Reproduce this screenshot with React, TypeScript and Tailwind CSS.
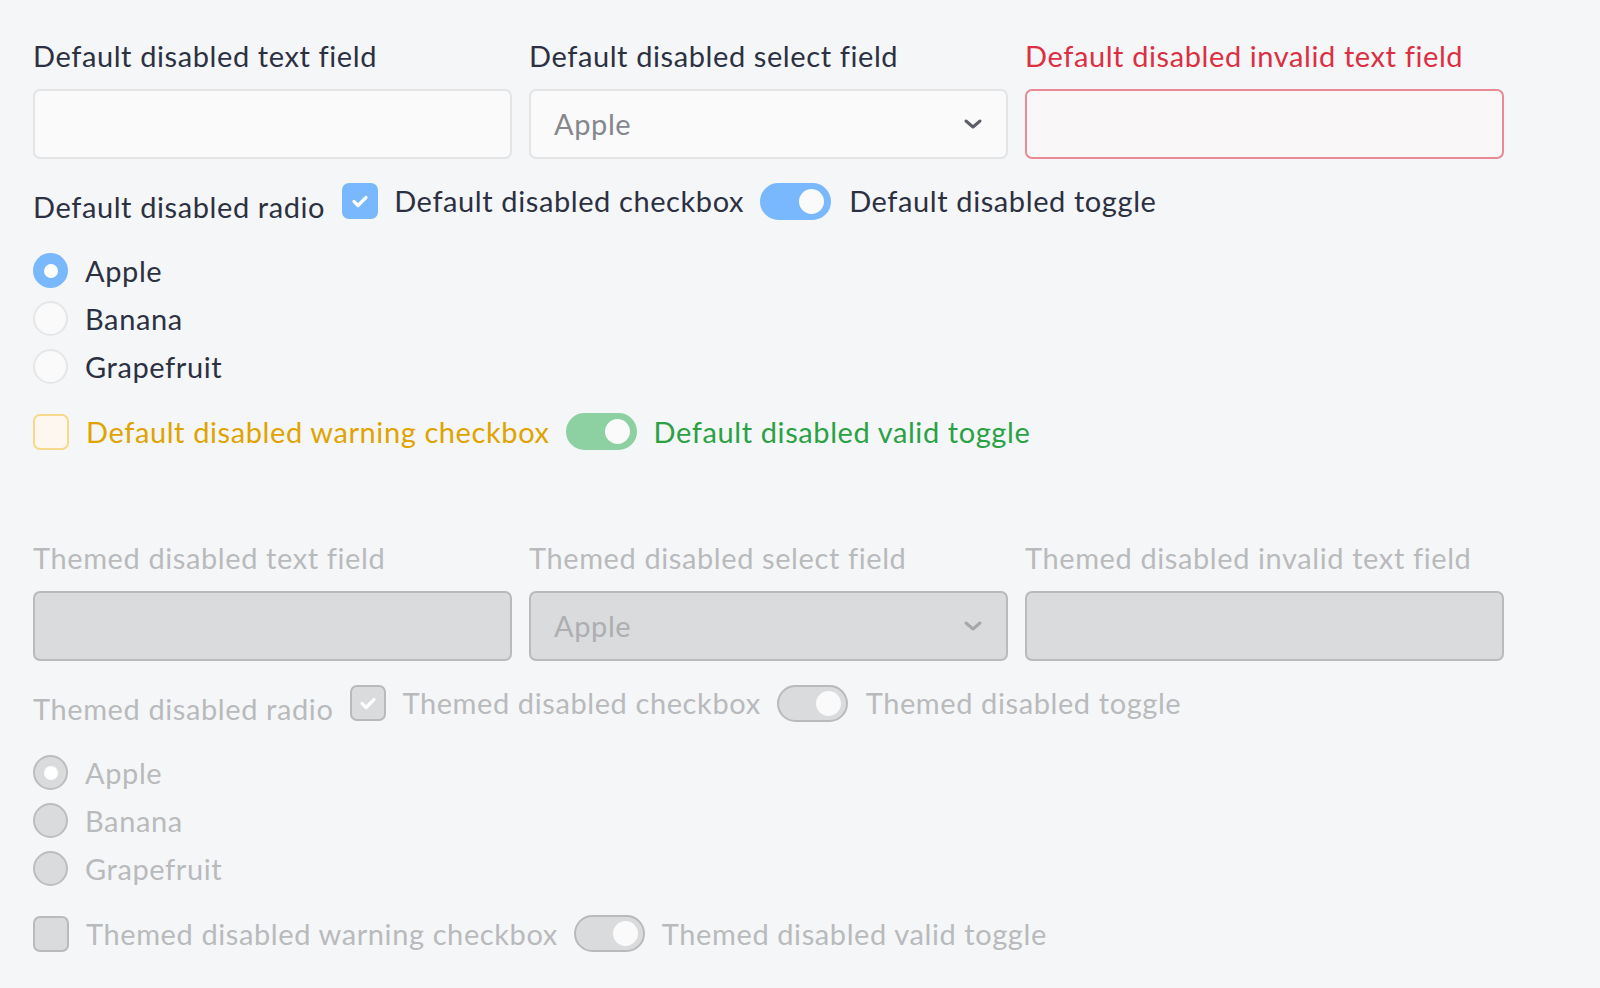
import React from "react";

type Theme = "default" | "themed";

function Chevron({ color }: { color: string }) {
    return (
        <svg width="22" height="14" viewBox="0 0 22 14" fill="none">
            <path d="M4 4l7 6 7-6" stroke={color} strokeWidth="3" strokeLinecap="round" strokeLinejoin="round" />
        </svg>
    );
}

function Check() {
    return (
        <svg width="26" height="26" viewBox="0 0 26 26" fill="none">
            <path d="M7 13.5l4 4L19 9.5" stroke="#ffffff" strokeWidth="3.2" strokeLinecap="round" strokeLinejoin="round" />
        </svg>
    );
}

function Field({ theme }: { theme: Theme }) {
    const d = theme === "default";
    const labels = d
        ? ["Default disabled text field", "Default disabled select field", "Default disabled invalid text field"]
        : ["Themed disabled text field", "Themed disabled select field", "Themed disabled invalid text field"];
    const label = d ? "text-[#2c3142]" : "text-[#b9babc]";
    const box = d
        ? "h-[70px] rounded-[7px] border-2 border-[#e3e4e6] bg-[#fafafa]"
        : "h-[70px] rounded-[7px] border-2 border-[#b9babb] bg-[#dadbdd]";
    return (
        <div className="grid grid-cols-[479px_479px_479px] gap-x-[17px]">
            <div className="flex flex-col gap-[13px]">
                <span className={`leading-[40px] ${label}`}>{labels[0]}</span>
                <div className={box} />
            </div>
            <div className="flex flex-col gap-[13px]">
                <span className={`leading-[40px] ${label}`}>{labels[1]}</span>
                <div className={`${box} flex items-center justify-between pl-[23px] pr-[22px]`}>
                    <span className={d ? "text-[#85878c]" : "text-[#adaeb1]"}>Apple</span>
                    <Chevron color={d ? "#5d5f66" : "#a6a7aa"} />
                </div>
            </div>
            <div className="flex flex-col gap-[13px]">
                <span className={`leading-[40px] ${d ? "text-[#dc2f42]" : label}`}>{labels[2]}</span>
                <div
                    className={
                        d ? "h-[70px] rounded-[7px] border-2 border-[#e98a96] bg-[#f9f7f8]" : box
                    }
                />
            </div>
        </div>
    );
}

function CheckBox({ tone, checked }: { tone: "blue" | "warn" | "gray"; checked?: boolean }) {
    const cls =
        tone === "blue"
            ? "bg-[#79b8fc] border-[#79b8fc]"
            : tone === "warn"
            ? "bg-[#fcf8ef] border-[#f6d98b]"
            : "bg-[#dadbdd] border-[#b9babb]";
    return (
        <span className={`flex h-[36px] w-[36px] shrink-0 items-center justify-center rounded-[7px] border-2 ${cls}`}>
            {checked && <Check />}
        </span>
    );
}

function Toggle({ tone }: { tone: "blue" | "green" | "gray" }) {
    const cls =
        tone === "blue"
            ? "bg-[#79b8fc] border-[#79b8fc]"
            : tone === "green"
            ? "bg-[#8dd0a1] border-[#8dd0a1]"
            : "bg-[#dadbdd] border-[#b9babb]";
    return (
        <span className={`flex h-[37px] w-[71px] shrink-0 items-center justify-end rounded-full border-2 pr-[5px] ${cls}`}>
            <span className="h-[25px] w-[25px] rounded-full bg-[#fafafa]" />
        </span>
    );
}

function Radio({ theme, checked }: { theme: Theme; checked?: boolean }) {
    if (theme === "default") {
        return checked ? (
            <span className="flex h-[35px] w-[35px] shrink-0 items-center justify-center rounded-full bg-[#79b8fc]">
                <span className="h-[14px] w-[14px] rounded-full bg-white" />
            </span>
        ) : (
            <span className="h-[35px] w-[35px] shrink-0 rounded-full border-2 border-[#e5e6e8] bg-[#fafafa]" />
        );
    }
    return (
        <span className="flex h-[35px] w-[35px] shrink-0 items-center justify-center rounded-full border-2 border-[#bcbdbe] bg-[#dadbdd]">
            {checked && <span className="h-[14px] w-[14px] rounded-full bg-white" />}
        </span>
    );
}

function Section({ theme }: { theme: Theme }) {
    const d = theme === "default";
    const name = d ? "Default" : "Themed";
    const text = d ? "text-[#2c3142]" : "text-[#b9babc]";
    return (
        <section className="flex flex-col">
            <Field theme={theme} />
            <div className="mt-[24px] flex items-start">
                <span className={`mr-[17px] pt-[6px] leading-[36px] ${text}`}>{name} disabled radio</span>
                <CheckBox tone={d ? "blue" : "gray"} checked />
                <span className={`ml-[16px] mr-[16px] leading-[36px] ${text}`}>{name} disabled checkbox</span>
                <Toggle tone={d ? "blue" : "gray"} />
                <span className={`ml-[18px] leading-[36px] ${text}`}>{name} disabled toggle</span>
            </div>
            <div className="mt-[28px] flex flex-col gap-[13px]">
                {["Apple", "Banana", "Grapefruit"].map((f, i) => (
                    <label key={f} className="flex items-center gap-[17px]">
                        <Radio theme={theme} checked={i === 0} />
                        <span className={`leading-[35px] ${text}`}>{f}</span>
                    </label>
                ))}
            </div>
            <div className="mt-[29px] flex items-center">
                <CheckBox tone={d ? "warn" : "gray"} />
                <span className={`ml-[17px] mr-[16px] leading-[36px] ${d ? "text-[#e0a300]" : text}`}>
                    {name} disabled warning checkbox
                </span>
                <Toggle tone={d ? "green" : "gray"} />
                <span className={`ml-[17px] leading-[36px] ${d ? "text-[#2aa243]" : text}`}>
                    {name} disabled valid toggle
                </span>
            </div>
        </section>
    );
}

export default function App() {
    return (
        <div className="min-h-screen bg-[#f5f6f8] px-[33px] pt-[36px] text-[29px] tracking-[0.6px] font-['Lato',sans-serif]">
            <Section theme="default" />
            <div className="mt-[88px]">
                <Section theme="themed" />
            </div>
        </div>
    );
}
